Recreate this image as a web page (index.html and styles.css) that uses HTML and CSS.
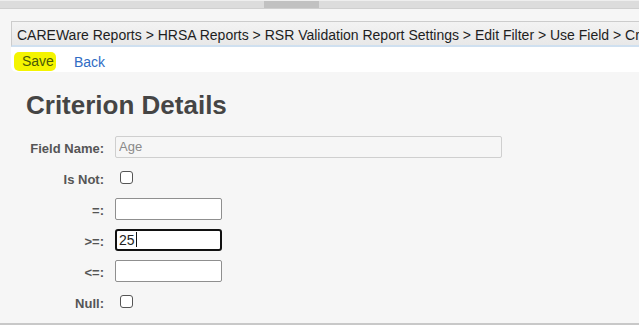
FILE: index.html
```html
<!DOCTYPE html>
<html>
<head>
<meta charset="utf-8">
<link rel="stylesheet" href="styles.css">
</head>
<body>
<div class="hscroll"><div class="thumb"></div></div>
<div class="frame">
  <div class="crumbs">CAREWare Reports &gt; HRSA Reports &gt; RSR Validation Report Settings &gt; Edit Filter &gt; Use Field &gt; Criterion Details</div>
  <div class="toolbar">
    <a class="link save" href="#">Save</a>
    <a class="link" href="#">Back</a>
  </div>
</div>
<div class="content">
  <h1 class="title">Criterion Details</h1>
  <div class="form">
    <label class="lbl">Field Name:</label>
    <div class="field"><input class="txt wide" type="text" value="Age" disabled></div>
    <label class="lbl">Is Not:</label>
    <div class="field"><span class="chk"></span></div>
    <label class="lbl">=:</label>
    <div class="field"><input class="txt" type="text" value=""></div>
    <label class="lbl">&gt;=:</label>
    <div class="field"><span class="txt focus">25<span class="caret"></span></span></div>
    <label class="lbl">&lt;=:</label>
    <div class="field"><input class="txt" type="text" value=""></div>
    <label class="lbl">Null:</label>
    <div class="field"><span class="chk"></span></div>
  </div>
</div>
</body>
</html>
```
FILE: styles.css
```css
html, body {
  margin: 0;
  padding: 0;
}
body {
  width: 639px;
  height: 325px;
  overflow: hidden;
  background: #f6f6f6;
  font-family: "Liberation Sans", Arial, sans-serif;
  box-sizing: border-box;
  border-bottom: 2px solid #c8c8c8;
}
.hscroll {
  height: 7px;
  background: #dcdcdc;
  border-top: 1px solid #eeeeee;
  border-bottom: 1px solid #cfcfcf;
  display: flex;
}
.thumb {
  margin-left: 264px;
  width: 55px;
  background: #c1c1c1;
}
.frame {
  margin: 12px 0 0 11px;
}
.crumbs {
  height: 21px;
  padding-top: 2px;
  line-height: 23px;
  padding-left: 5px;
  font-size: 14px;
  color: #1e1e1e;
  white-space: nowrap;
  overflow: hidden;
  background: linear-gradient(#f3f3f3, #e8e8e8);
  border: 1px solid #cccccc;
  border-right: none;
  border-bottom: 2px solid #cfe0f0;
}
.toolbar {
  box-sizing: border-box;
  background: #ffffff;
  height: 25px;
  padding: 4px 0 0 3px;
  display: flex;
  align-items: center;
  gap: 18px;
  border-radius: 0 0 0 6px;
}
.link {
  font-size: 14px;
  color: #2f6cc4;
  text-decoration: none;
}
.save {
  background: #f4f400;
  color: #4a5a08;
  padding: 1px 2px 2px 8px;
  border-radius: 5px;
}
.content {
  padding: 18px 0 0 26px;
}
.title {
  margin: 0 0 16px 0;
  font-size: 26px;
  font-weight: bold;
  color: #454545;
  line-height: 30px;
}
.form {
  display: grid;
  grid-template-columns: 78px auto;
  column-gap: 11px;
  row-gap: 10px;
  align-items: center;
}
.lbl {
  text-align: right;
  font-size: 13px;
  font-weight: bold;
  color: #555;
  padding-top: 3px;
}
.field {
  display: flex;
  align-items: center;
  height: 21px;
}
.txt {
  box-sizing: border-box;
  width: 107px;
  height: 22px;
  border: 1px solid #8f8f8f;
  border-radius: 2px;
  background: #fff;
  font-family: "Liberation Sans", Arial, sans-serif;
  font-size: 13px;
  padding: 0 3px;
  margin: 0;
  display: flex;
  align-items: center;
  color: #222;
}
.txt.wide {
  width: 387px;
  border: 1px solid #cfcfcf;
  background: #f6f6f6;
  color: #8a8a8a;
}
.txt.focus {
  border: 2px solid #111;
  border-radius: 3px;
  padding: 0 2px;
  font-size: 14px;
}
.caret {
  width: 1px;
  height: 15px;
  background: #111;
  margin-left: 1px;
}
.chk {
  box-sizing: border-box;
  width: 13px;
  height: 13px;
  margin-left: 5px;
  border: 1px solid #555;
  border-radius: 3px;
  background: #fff;
}
```
